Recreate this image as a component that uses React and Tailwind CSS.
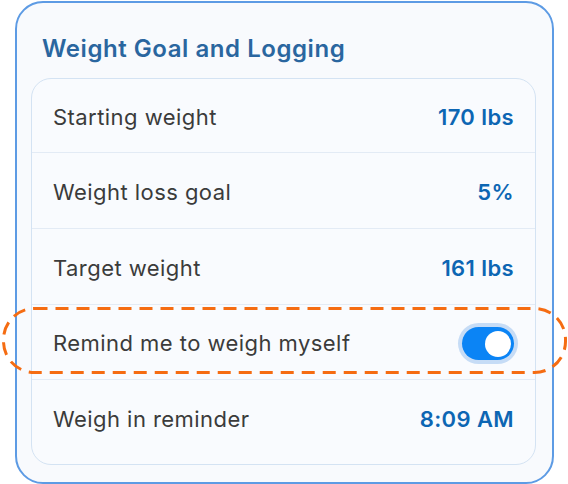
import React from "react";

const font = { fontFamily: "Inter, 'Noto Sans', sans-serif" };

function Row({ label, children, className = "" }) {
  return (
    <div className={`flex items-center justify-between pl-[21px] pr-[21px] pt-[3px] ${className}`}>
      <span className="text-[22px] text-[#3b3b3b] tracking-[0.45px]">{label}</span>
      {children}
    </div>
  );
}

function Value({ children }) {
  return <span className="text-[22px] font-semibold text-[#0d66b3] tracking-[0.4px]">{children}</span>;
}

export default function App() {
  return (
    <div className="relative w-[568px] h-[484px] bg-white" style={font}>
      <div className="absolute left-[15px] top-[1px] w-[539px] h-[483px] rounded-[28px] border-2 border-[#5d9be4] bg-[#f8fafd] flex flex-col">
        <div className="pl-[25px] pt-[31px] h-[75px] text-[24px] font-semibold text-[#2a669f] tracking-[0.55px] leading-[30px]">
          Weight Goal and Logging
        </div>
        <div className="ml-[14px] mr-[16px] h-[387px] rounded-[20px] border border-[#d4e3f3] bg-[#f9fbfe] flex flex-col overflow-hidden">
          <Row label="Starting weight" className="h-[74px] border-b border-[#e3ebf5]">
            <Value>170 lbs</Value>
          </Row>
          <Row label="Weight loss goal" className="h-[76px] border-b border-[#e3ebf5]">
            <Value>5%</Value>
          </Row>
          <Row label="Target weight" className="h-[76px] border-b border-[#e3ebf5]">
            <Value>161 lbs</Value>
          </Row>
          <Row label="Remind me to weigh myself" className="h-[75px] border-b border-[#e3ebf5]">
            <div className="w-[52px] h-[33px] rounded-full bg-[#0b84f5] ring-4 ring-[#c6dcf6] flex items-center justify-end pr-[3px]">
              <div className="w-[26px] h-[26px] rounded-full bg-white" />
            </div>
          </Row>
          <Row label="Weigh in reminder" className="h-[76px]">
            <Value>8:09 AM</Value>
          </Row>
        </div>
      </div>
      <svg className="absolute left-0 top-[306px]" width="568" height="70" viewBox="0 0 568 70">
        <rect x="3.5" y="2.5" width="562" height="64" rx="31" ry="31" fill="none" stroke="#f56c12" strokeWidth="3" strokeDasharray="13 8" />
      </svg>
    </div>
  );
}
